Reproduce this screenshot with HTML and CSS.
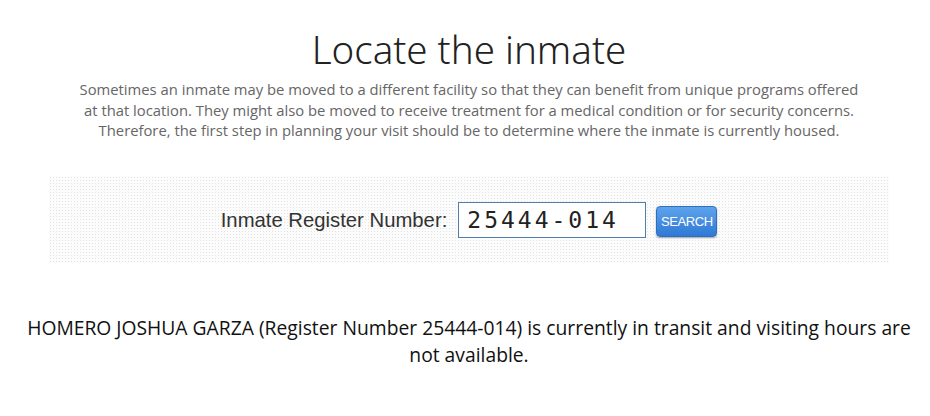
FILE: index.html
```html
<!DOCTYPE html>
<html lang="en">
<head>
  <meta charset="UTF-8">
  <title>Locate the inmate</title>
  <link rel="stylesheet" href="styles.css">
</head>
<body>
  <div class="page">
    <h1 class="title">Locate the inmate</h1>
    <p class="intro">
      Sometimes an inmate may be moved to a different facility so that they can benefit from unique programs offered<br>
      at that location. They might also be moved to receive treatment for a medical condition or for security concerns.<br>
      Therefore, the first step in planning your visit should be to determine where the inmate is currently housed.
    </p>

    <!-- Search box -->
    <div class="search-box">
      <label class="search-label" for="regNumber">Inmate Register Number:</label>
      <input class="search-input" id="regNumber" type="text" value="25444-014">
      <button class="search-button">SEARCH</button>
    </div>

    <p class="result">HOMERO JOSHUA GARZA (Register Number 25444-014) is currently in transit and visiting hours are<br>not available.</p>
  </div>
</body>
</html>
```

FILE: styles.css
```css
body {
  margin: 0;
  background: #fff;
  font-family: "Open Sans", sans-serif;
}

.page {
  width: 900px;
  margin: 0 auto;
  padding-left: 8px;
  text-align: center;
}

.title {
  margin: 0;
  padding-top: 26px;
  font-family: "Noto Sans", sans-serif;
  font-weight: 300;
  font-size: 38.5px;
  line-height: 46px;
  color: #222;
}

.intro {
  margin: 7px auto 0;
  width: 860px;
  font-size: 14.8px;
  line-height: 20.5px;
  color: #666;
  white-space: nowrap;
}

.search-box {
  margin: 35px auto 0;
  width: 840px;
  height: 87px;
  display: flex;
  align-items: center;
  justify-content: center;
  background-color: #fcfcfc;
  background-image: radial-gradient(#e2e2e2 0.9px, transparent 1px);
  background-size: 3px 3px;
}

.search-label {
  font-family: "Liberation Sans", Arial, sans-serif;
  font-size: 20.3px;
  color: #333;
  margin-right: 11px;
  margin-top: 2px;
}

.search-input {
  box-sizing: border-box;
  width: 188px;
  height: 36px;
  border: 1px solid #4f7ea8;
  padding: 0 8px;
  font-family: "DejaVu Sans Mono", monospace;
  font-size: 23px;
  letter-spacing: 3px;
  color: #222;
  margin-right: 10px;
  margin-top: 2px;
}

.search-button {
  width: 61px;
  height: 31px;
  border: 1px solid #2f6fc0;
  border-radius: 4px;
  background: linear-gradient(#5ea3ec, #2f79d6);
  box-shadow: 0 1px 2px rgba(0, 0, 0, 0.35);
  color: #fff;
  font-family: "Liberation Sans", Arial, sans-serif;
  font-size: 13px;
  letter-spacing: -0.4px;
  padding: 0;
  margin-top: 4px;
}

.result {
  margin: 51px 0 0 -10px;
  width: 920px;
  font-size: 19.3px;
  line-height: 27px;
  color: #111;
  white-space: nowrap;
}
```
